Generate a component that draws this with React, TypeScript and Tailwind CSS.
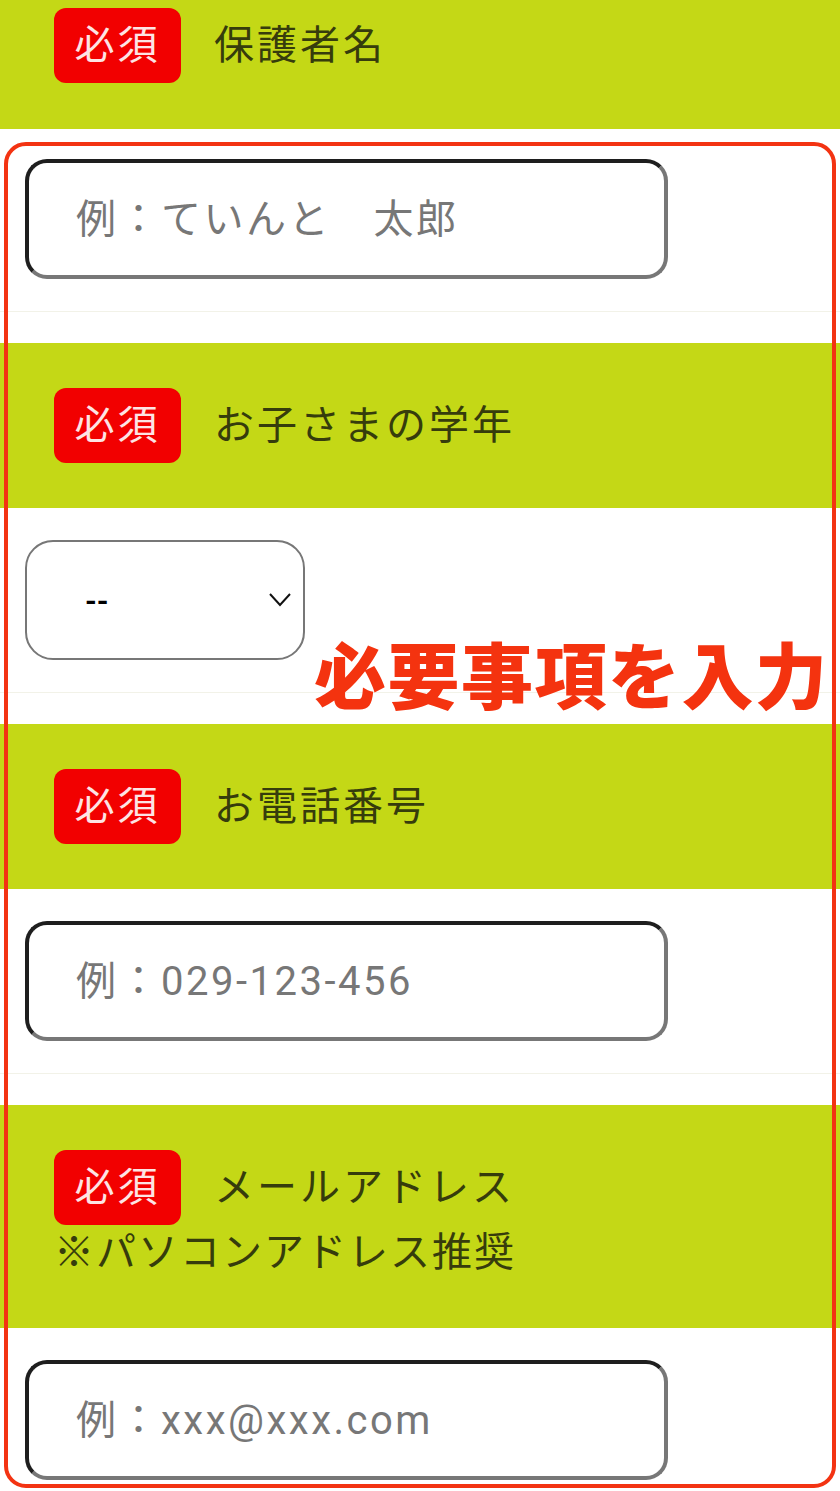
import React from "react";

const font = { fontFamily: 'Roboto, "Noto Sans CJK JP", sans-serif' };

const Badge = () => (
    <span className="inline-flex h-[75px] w-[127px] shrink-0 items-center justify-center rounded-[12px] bg-[#f20000] text-[40px] leading-none tracking-[3px] text-[#fde4e4]">
        必須
    </span>
);

const Header = ({ label, note, first }: { label: string; note?: string; first?: boolean }) => (
    <div
        className={
            "bg-[#c4d816] pl-[54px] text-[#363c0c] " +
            (first ? "pt-[8px] pb-[46px]" : note ? "pt-[45px] pb-[50px]" : "py-[45px]")
        }
    >
        <div className="flex items-center gap-[33px]">
            <Badge />
            <span className="text-[40px] leading-none tracking-[3px]">{label}</span>
        </div>
        {note && (
            <p className="mt-[3px] text-[40px] leading-[50px] tracking-[2px]">{note}</p>
        )}
    </div>
);

const TextInput = ({ placeholder }: { placeholder: string }) => (
    <input
        type="text"
        placeholder={placeholder}
        className="box-border h-[120px] w-[643px] rounded-[22px] border-4 border-t-[#1e1e1e] border-l-[#1e1e1e] border-b-[#777] border-r-[#777] bg-white pl-[47px] text-[40px] tracking-[2.5px] text-[#333] outline-none placeholder:text-[#777]"
        style={font}
    />
);

const Body = ({ children, first, last }: { children: React.ReactNode; first?: boolean; last?: boolean }) => (
    <div
        className={
            "bg-white pl-[25px] " +
            (first ? "pt-[30px] " : "pt-[32px] ") +
            (last ? "pb-[12px]" : "mb-[31px] border-b border-[#f2f2e8] pb-[32px]")
        }
    >
        {children}
    </div>
);

export default function App() {
    return (
        <div className="relative h-[1491px] w-[840px] overflow-hidden bg-white" style={font}>
            {/* 保護者名 */}
            <Header label="保護者名" first />
            <Body first>
                <TextInput placeholder="例：ていんと　太郎" />
            </Body>

            {/* 学年 */}
            <Header label="お子さまの学年" />
            <Body>
                <div className="relative h-[120px] w-[280px]">
                    <select
                        className="box-border h-full w-full appearance-none rounded-[28px] border-2 border-[#777] bg-white pl-[58px] text-[30px] font-bold text-black outline-none"
                        style={font}
                        defaultValue="--"
                    >
                        <option>--</option>
                        <option>小学1年</option>
                        <option>小学2年</option>
                    </select>
                    <svg
                        className="pointer-events-none absolute left-[244px] top-[51px]"
                        width="22"
                        height="16"
                        viewBox="0 0 22 16"
                        fill="none"
                    >
                        <path d="M1 3 L11 14 L21 3" stroke="#111" strokeWidth="2" />
                    </svg>
                </div>
            </Body>

            {/* 電話番号 */}
            <Header label="お電話番号" />
            <Body>
                <TextInput placeholder="例：029-123-456" />
            </Body>

            {/* メール */}
            <Header label="メールアドレス" note="※パソコンアドレス推奨" />
            <Body last>
                <TextInput placeholder="例：xxx@xxx.com" />
            </Body>

            {/* annotation overlay */}
            <div className="pointer-events-none absolute left-[4px] top-[142px] h-[1346px] w-[832px] rounded-[22px] border-4 border-[#f33312]" />
            <p
                className="pointer-events-none absolute left-[314px] top-[636px] text-[72px] font-black leading-[72px] tracking-[1.5px] text-[#f4330f]"
                style={{ fontFamily: '"Noto Sans CJK JP", sans-serif' }}
            >
                必要事項を入力
            </p>
        </div>
    );
}
